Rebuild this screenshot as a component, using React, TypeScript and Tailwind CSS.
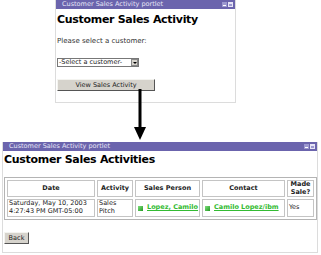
const font = "font-['DejaVu_Sans',Verdana,sans-serif]";

function TitleBar({ title }: { title: string }) {
  return (
    <div className="flex h-[9px] items-center justify-between bg-[#6b64ad] pl-[6px] pr-[2px]">
      <span className="text-[6.5px] leading-none text-[#e6e4f6]">{title}</span>
      <div className="flex items-center gap-[1px]">
        <span className="flex h-[5px] w-[5px] items-end justify-center bg-[#9c98d0]">
          <span className="mb-[1px] h-px w-[3px] bg-white" />
        </span>
        <span className="h-[5px] w-[5px] border border-t-2 border-[#e6e4f6] bg-[#9c98d0]" />
      </div>
    </div>
  );
}

function GrayButton({ label, className }: { label: string; className?: string }) {
  return (
    <button
      type="button"
      className={`block border border-t-[#f4f4f0] border-l-[#f4f4f0] border-r-[#555] border-b-[#555] bg-[#d6d3cc] text-[6.5px] leading-none text-[#222] ${className ?? ""}`}
    >
      {label}
    </button>
  );
}

function Bullet() {
  return <span className="inline-block h-[5px] w-[5px] shrink-0 bg-gradient-to-br from-[#7ee07e] to-[#1a9a1a]" />;
}

export default function App() {
  return (
    <div className={`relative h-[255px] w-[321px] overflow-hidden bg-white text-[#222] ${font}`}>
      {/* select portlet */}
      <div className="ml-[55px] h-[103px] w-[181px] border-x border-b border-[#dcdcdc]">
        <TitleBar title="Customer Sales Activity portlet" />
        <div className="px-[1px]">
          <h1 className="mt-[4px] text-[11px] font-bold leading-[13px] tracking-[-0.3px] text-black">Customer Sales Activity</h1>
          <p className="mt-[11px] text-[7px] leading-[8px] text-[#333]">Please select a customer:</p>
          <div className="mt-[13px] flex h-[9px] w-[82px] items-center justify-between border border-[#777] bg-white">
            <span className="pl-[1px] text-[6.5px] leading-none">-Select a customer-</span>
            <span className="flex h-[7px] w-[7px] items-center justify-center border border-[#888] bg-[#d6d3cc]">
              <span className="h-0 w-0 border-x-[2px] border-t-[2px] border-x-transparent border-t-black" />
            </span>
          </div>
          <GrayButton label="View Sales Activity" className="mt-[12px] h-[12px] w-[98px]" />
        </div>
      </div>

      {/* arrow */}
      <svg className="absolute left-[133px] top-[89px]" width="14" height="52" viewBox="0 0 14 52">
        <rect x="5.5" y="0" width="3" height="40" fill="#000" />
        <polygon points="1,38 13,38 7,51" fill="#000" />
      </svg>

      {/* results portlet */}
      <div className="ml-[2px] mt-[39px] h-[111px] w-[316px] border-x border-b border-[#dcdcdc]">
        <TitleBar title="Customer Sales Activity portlet" />
        <div className="px-[1px]">
          <h1 className="mt-[2px] text-[11px] font-bold leading-[13px] tracking-[-0.3px] text-black">Customer Sales Activities</h1>
          <table className="mt-[11px] w-[313px] table-fixed border-separate border-spacing-[2px] border border-[#b4b4b4] text-[6.5px] leading-[7.5px]">
            <thead>
              <tr className="h-[16px]">
                <th className="w-[88px] border border-[#c4c4c4] font-bold">Date</th>
                <th className="w-[36px] border border-[#c4c4c4] font-bold">Activity</th>
                <th className="w-[65px] border border-[#c4c4c4] font-bold">Sales Person</th>
                <th className="w-[83px] border border-[#c4c4c4] font-bold">Contact</th>
                <th className="border border-[#c4c4c4] font-bold">
                  Made
                  <br />
                  Sale?
                </th>
              </tr>
            </thead>
            <tbody>
              <tr className="h-[18px]">
                <td className="border border-[#c4c4c4] px-[1px] align-top">
                  Saturday, May 10, 2003
                  <br />
                  4:27:43 PM GMT-05:00
                </td>
                <td className="border border-[#c4c4c4] px-[1px] align-top">
                  Sales
                  <br />
                  Pitch
                </td>
                <td className="border border-[#c4c4c4] px-[2px]">
                  <span className="flex items-center gap-[4px] whitespace-nowrap">
                    <Bullet />
                    <a className="font-bold text-[#33bb33] underline">Lopez, Camilo</a>
                  </span>
                </td>
                <td className="border border-[#c4c4c4] px-[2px]">
                  <span className="flex items-center gap-[4px] whitespace-nowrap">
                    <Bullet />
                    <a className="font-bold text-[#33bb33] underline">Camilo Lopez/ibm</a>
                  </span>
                </td>
                <td className="border border-[#c4c4c4] px-[1px]">Yes</td>
              </tr>
            </tbody>
          </table>
          <GrayButton label="Back" className="mt-[12px] h-[12px] w-[25px]" />
        </div>
      </div>
    </div>
  );
}
